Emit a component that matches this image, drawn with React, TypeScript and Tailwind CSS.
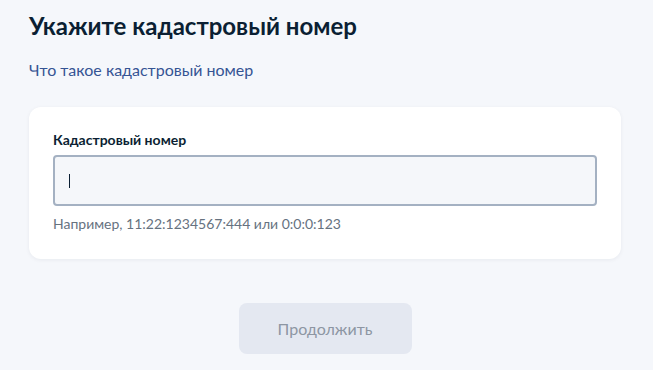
export default function App() {
  return (
    <div className="min-h-[370px] w-full bg-[#f5f7fb] pl-[29px] pr-[32px] pt-[10px] font-['Lato',sans-serif]">
      <h1 className="text-[24px] font-bold leading-[32px] text-[#0b1f33]">Укажите кадастровый номер</h1>

      <a href="#" className="mt-[18px] block text-[16px] leading-[20px] text-[#355494]">
        Что такое кадастровый номер
      </a>

      <div className="mt-[27px] rounded-[12px] bg-white px-[24px] pt-[24px] pb-[26px] shadow-[0_1px_4px_rgba(11,31,51,0.06)]">
        <label className="block text-[14px] font-bold leading-[18px] text-[#0b1f33]">Кадастровый номер</label>
        <div className="mt-[6px] flex h-[51px] items-center rounded-[4px] border-2 border-[#a4b1c2] bg-[#f5f7fa] px-[14px]">
          <div className="h-[14px] w-px bg-[#0b1f33]" />
        </div>
        <p className="mt-[9px] text-[14px] leading-[18px] text-[#66727f]">
          Например, 11:22:1234567:444 или 0:0:0:123
        </p>
      </div>

      <div className="mt-[44px] flex justify-center">
        <button className="h-[51px] w-[173px] rounded-[8px] bg-[#e4e8f1] text-[16px] text-[#8d96a3]">
          Продолжить
        </button>
      </div>
    </div>
  )
}
